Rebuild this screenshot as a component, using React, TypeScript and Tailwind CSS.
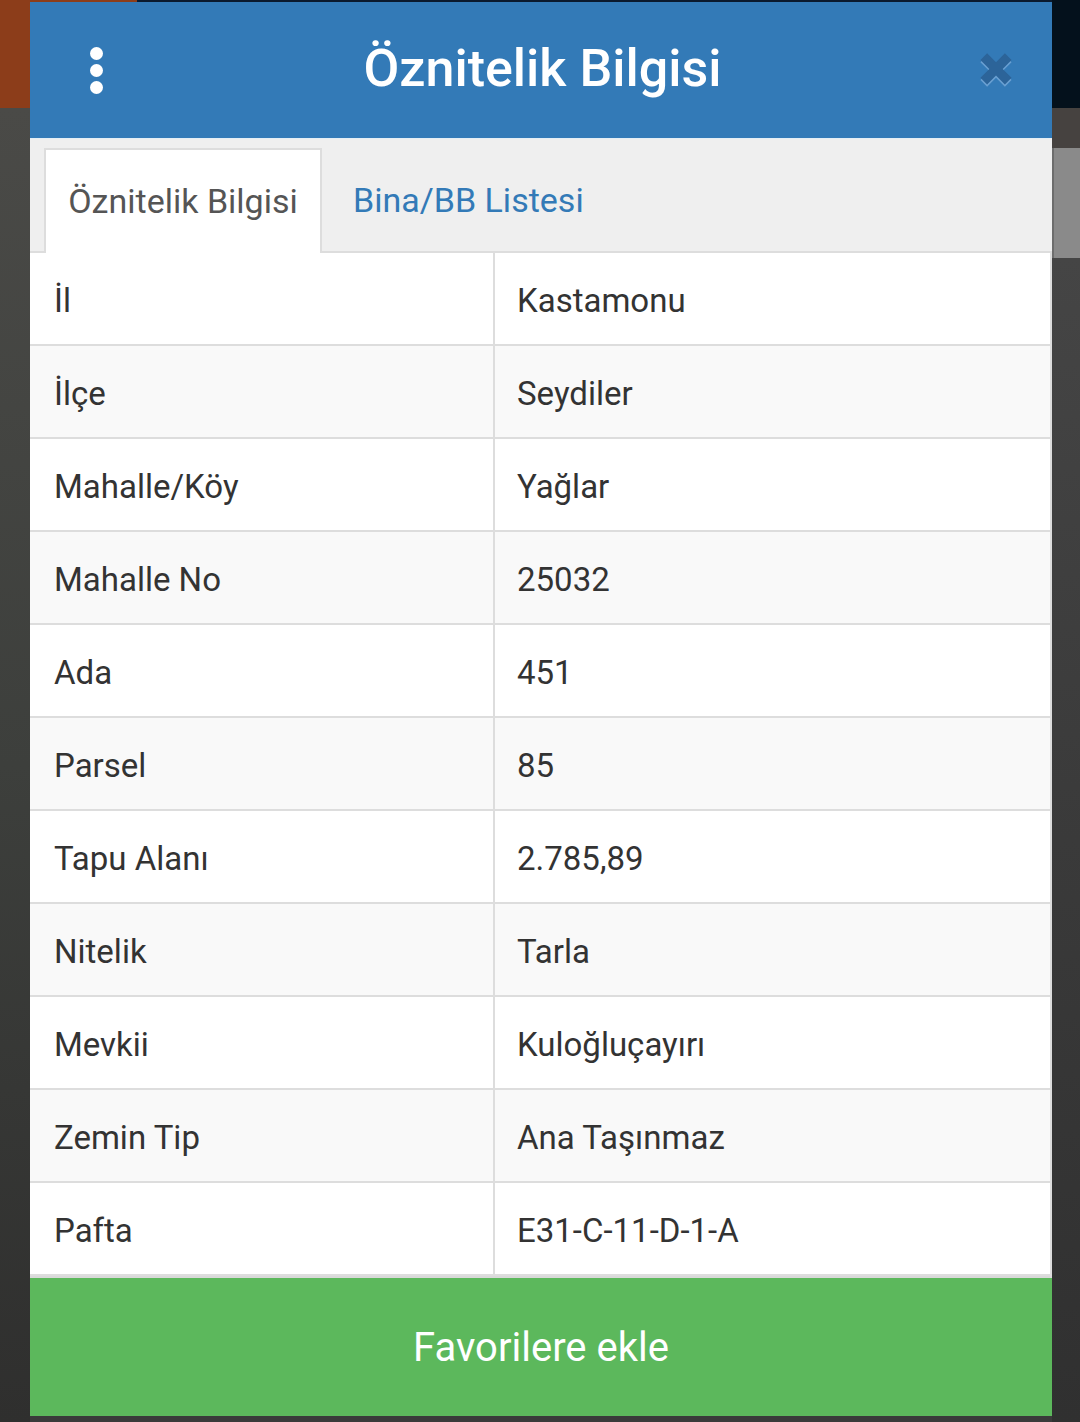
import { useState } from 'react'

const ROWS: { k: string; v: string }[] = [
  { k: 'İl', v: 'Kastamonu' },
  { k: 'İlçe', v: 'Seydiler' },
  { k: 'Mahalle/Köy', v: 'Yağlar' },
  { k: 'Mahalle No', v: '25032' },
  { k: 'Ada', v: '451' },
  { k: 'Parsel', v: '85' },
  { k: 'Tapu Alanı', v: '2.785,89' },
  { k: 'Nitelik', v: 'Tarla' },
  { k: 'Mevkii', v: 'Kuloğluçayırı' },
  { k: 'Zemin Tip', v: 'Ana Taşınmaz' },
  { k: 'Pafta', v: 'E31-C-11-D-1-A' },
]

function CloseIcon() {
  const d = 'M3 9 L9 3 L17 11 L25 3 L31 9 L23 17 L31 25 L25 31 L17 23 L9 31 L3 25 L11 17 Z'
  return (
    <svg width="38" height="40" viewBox="0 0 34 36">
      <path d={d} transform="translate(0 2)" fill="#6aa0d2" />
      <path d={d} fill="#2c6499" />
    </svg>
  )
}

export default function App() {
  const [tab, setTab] = useState(0)

  return (
    <div className="w-[1080px] h-[1422px] flex bg-[#3a3a3a] font-['Roboto','Noto_Sans',sans-serif] overflow-hidden">
      <div className="w-[30px] flex flex-col">
        <div className="h-[108px] bg-[#8c3d1a]" />
        <div className="flex-1 bg-gradient-to-b from-[#4a4a47] via-[#3d3f3c] to-[#2f2f2e]" />
      </div>

      <div className="w-[1022px] flex flex-col">
        <div className="h-[2px] flex">
          <div className="w-[107px] bg-[#8c3d1a]" />
          <div className="flex-1 bg-[#0b1a2e]" />
        </div>

        <div className="flex flex-col bg-white">
          <header className="h-[136px] bg-[#337ab7] flex items-center pl-[60px] pr-[36px]">
            <div className="flex flex-col gap-[4px]">
              <span className="w-[13px] h-[13px] rounded-full bg-white" />
              <span className="w-[13px] h-[13px] rounded-full bg-white" />
              <span className="w-[13px] h-[13px] rounded-full bg-white" />
            </div>
            <h1 className="flex-1 text-center text-white text-[52px] font-medium leading-none pl-[6px] pb-[2px]">
              Öznitelik Bilgisi
            </h1>
            <div className="w-[40px] flex justify-center">
              <CloseIcon />
            </div>
          </header>

          <nav className="h-[115px] bg-[#efefef] border-t border-[#e4eef5] flex items-end pl-[14px] border-b-2 border-b-[#dddddd]">
            {['Öznitelik Bilgisi', 'Bina/BB Listesi'].map((t, i) => {
              const active = tab === i
              return (
                <button
                  key={t}
                  onClick={() => setTab(i)}
                  className={`h-[105px] mb-[-2px] text-[34px] leading-none pb-[2px] ${
                    active
                      ? 'bg-white border-2 border-b-0 border-[#dddddd] text-[#555555] w-[278px] px-[22px]'
                      : 'text-[#337ab7] pl-[31px]'
                  }`}
                >
                  {t}
                </button>
              )
            })}
          </nav>

          <div className="flex flex-col border-r-2 border-[#dddddd]">
            {ROWS.map((r, i) => (
              <div
                key={r.k}
                className={`h-[93px] flex border-b-2 border-[#dddddd] text-[33px] text-[#333333] ${
                  i % 2 ? 'bg-[#f9f9f9]' : 'bg-white'
                } ${i === ROWS.length - 1 ? 'border-b-0 h-[92px]' : ''}`}
              >
                <div className="w-[465px] border-r-2 border-[#dddddd] flex items-center pl-[24px] pt-[4px]">
                  {r.k}
                </div>
                <div className="flex-1 flex items-center pl-[22px] pt-[4px]">{r.v}</div>
              </div>
            ))}
          </div>

          <button className="h-[140px] bg-[#5cb85c] border-t-2 border-[#d9d9d9] text-white text-[40px] leading-none pt-[2px]">
            Favorilere ekle
          </button>
        </div>
      </div>

      <div className="w-[28px] flex flex-col">
        <div className="h-[108px] bg-[#04111c]" />
        <div className="h-[40px] bg-[#464240]" />
        <div className="h-[110px] bg-[#8a8a8a] border-l-2 border-[#6d6d6d]" />
        <div className="flex-1 bg-gradient-to-b from-[#454545] via-[#3a3a3a] to-[#303030]" />
      </div>
    </div>
  )
}
